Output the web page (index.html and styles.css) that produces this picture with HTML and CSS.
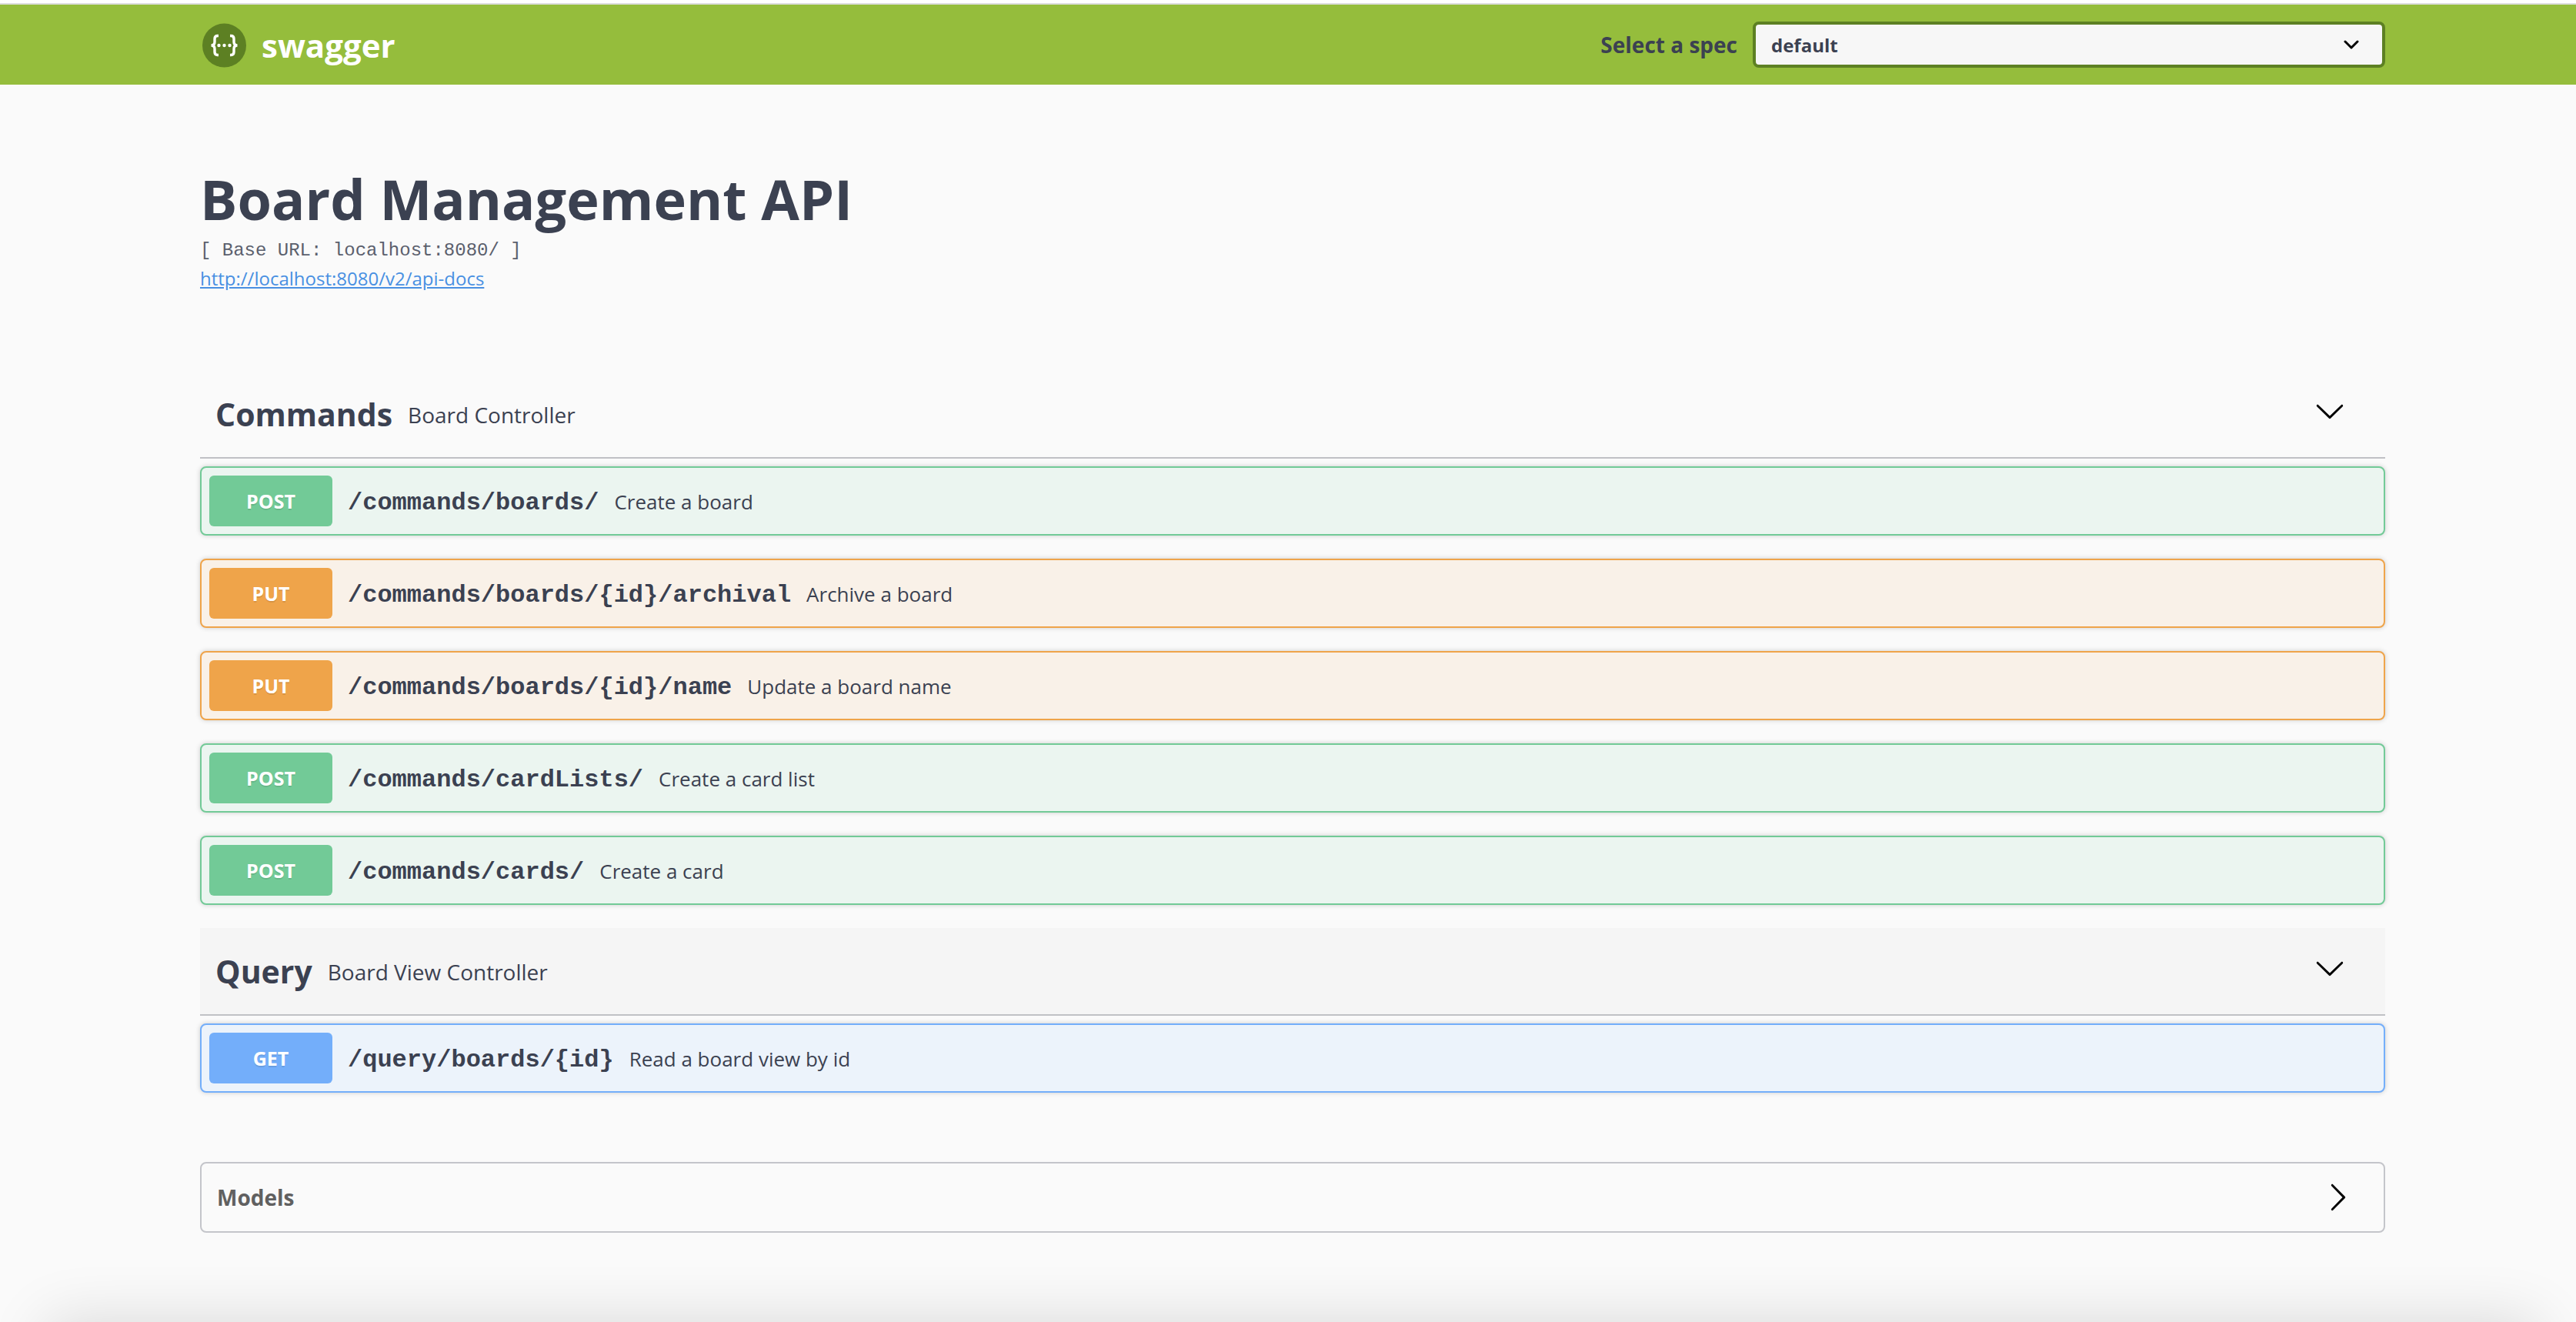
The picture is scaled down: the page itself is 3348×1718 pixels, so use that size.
FILE: index.html
```html
<!DOCTYPE html>
<html lang="en">
<head>
<meta charset="utf-8">
<title>Swagger UI</title>
<link rel="stylesheet" href="styles.css">
</head>
<body>
<svg class="sprite" aria-hidden="true">
  <symbol id="arrow-down" viewBox="0 0 20 20"><path d="M17.418 6.109c.272-.268.709-.268.979 0s.271.701 0 .969l-7.908 7.83c-.27.268-.707.268-.979 0l-7.908-7.83c-.27-.268-.27-.701 0-.969.271-.268.709-.268.979 0L10 13.25l7.418-7.141z"/></symbol>
  <symbol id="arrow-right" viewBox="0 0 20 20"><path d="M13.25 10L6.109 2.58c-.268-.27-.268-.707 0-.979.268-.27.701-.27.969 0l7.83 7.908c.268.271.268.709 0 .979l-7.83 7.908c-.271.271-.701.27-.969 0-.268-.269-.268-.707 0-.979L13.25 10z"/></symbol>
</svg>

<header class="topbar">
  <div class="wrapper topbar-row">
    <a class="brand" href="#">
      <svg class="brand-mark" viewBox="0 0 58 58" aria-hidden="true">
        <circle cx="29.500" cy="29" r="28.500" fill="#5d8023"/>
        <g fill="none" stroke="#fff" stroke-width="3.400">
          <path d="M22 16.500h-1.200q-3.800 0-3.800 4v4q0 4.500-4.500 4.500q4.500 0 4.500 4.500v4q0 4 3.800 4h1.200"/>
          <path d="M37 16.500h1.200q3.800 0 3.800 4v4q0 4.500 4.500 4.500q-4.500 0-4.500 4.500v4q0 4-3.800 4h-1.200"/>
        </g>
        <g fill="#fff"><circle cx="22.500" cy="29" r="2.200"/><circle cx="29.500" cy="29" r="2.200"/><circle cx="36.500" cy="29" r="2.200"/></g>
      </svg>
      <span>swagger</span>
    </a>
    <div class="spec">
      <label for="spec">Select a spec</label>
      <div class="spec-box">
        <select id="spec"><option>default</option></select>
        <svg class="spec-arrow" viewBox="0 0 20 12" aria-hidden="true"><path d="M2 2l8 8 8-8" fill="none" stroke="#000" stroke-width="3" stroke-linecap="round" stroke-linejoin="round"/></svg>
      </div>
    </div>
  </div>
</header>

<main class="wrapper">
  <section class="info">
    <h1>Board Management API</h1>
    <p class="base-url">[ Base URL: localhost:8080/ ]</p>
    <p class="docs"><a href="http://localhost:8080/v2/api-docs">http://localhost:8080/v2/api-docs</a></p>
  </section>

  <section class="tag">
    <button class="tag-head"><span class="tag-name">Commands</span><span class="tag-text">Board Controller</span><svg class="arrow"><use href="#arrow-down"/></svg></button>
    <div class="ops">
      <button class="op post"><span class="method">POST</span><span class="path">/commands/boards/</span><span class="summary">Create a board</span></button>
      <button class="op put"><span class="method">PUT</span><span class="path">/commands/boards/{id}/archival</span><span class="summary">Archive a board</span></button>
      <button class="op put"><span class="method">PUT</span><span class="path">/commands/boards/{id}/name</span><span class="summary">Update a board name</span></button>
      <button class="op post"><span class="method">POST</span><span class="path">/commands/cardLists/</span><span class="summary">Create a card list</span></button>
      <button class="op post"><span class="method">POST</span><span class="path">/commands/cards/</span><span class="summary">Create a card</span></button>
    </div>
  </section>

  <section class="tag">
    <button class="tag-head active"><span class="tag-name">Query</span><span class="tag-text">Board View Controller</span><svg class="arrow"><use href="#arrow-down"/></svg></button>
    <div class="ops">
      <button class="op get"><span class="method">GET</span><span class="path">/query/boards/{id}</span><span class="summary">Read a board view by id</span></button>
    </div>
  </section>

  <button class="models"><span>Models</span><svg class="arrow"><use href="#arrow-right"/></svg></button>
</main>
<div class="bottom-shade"></div>
</body>
</html>
```
FILE: styles.css
```css
* { box-sizing: border-box; }

html { background: #fafafa; }

body {
  margin: 0;
  border-top: 4px solid #fff;
  color: #3b4151;
  font-family: "Open Sans", sans-serif;
}

h1, p { margin: 0; }
button, select { font: inherit; color: inherit; }
button { cursor: pointer; }
.sprite { display: none; }

.wrapper {
  max-width: 2920px;
  margin: 0 auto;
  padding: 0 34px 0 46px;
}

.topbar {
  border-top: 2px solid #dedede;
  padding: 22px 0;
  background: #95bd3c;
}

.topbar-row {
  display: flex;
  align-items: center;
  justify-content: space-between;
}

.brand {
  display: flex;
  align-items: center;
  gap: 20px;
  padding: 2px 0 0 2px;
  color: #fff;
  font-size: 42px;
  font-weight: 700;
  line-height: 58px;
  text-decoration: none;
}
.brand-mark { width: 58px; height: 58px; }

.spec {
  display: flex;
  align-items: center;
  gap: 20px;
  font-weight: 700;
}
.spec label { font-size: 28px; }
.spec-box { display: grid; width: 822px; align-items: center; }
.spec-box > * { grid-area: 1 / 1; }
.spec select {
  appearance: none;
  height: 60px;
  padding: 0 20px;
  border: 4px solid #5d8023;
  border-radius: 8px;
  background: #f7f7f7;
  font-size: 24px;
  font-weight: 700;
}
.spec-arrow {
  width: 20px;
  height: 12px;
  margin-right: 34px;
  justify-self: end;
  pointer-events: none;
}

.info { padding: 98px 0 102px; }
h1 { font-size: 72px; line-height: 100px; }
.base-url {
  padding-top: 2px;
  font-family: "Liberation Mono", monospace;
  font-size: 24px;
  line-height: 32px;
  color: #5b606d;
}
.docs { padding-top: 2px; font-size: 24px; line-height: 36px; }
.docs a { color: #4990e2; }

.tag-head {
  display: flex;
  align-items: center;
  width: 100%;
  height: 114px;
  padding: 0 52px 0 20px;
  border: 0;
  border-bottom: 2px solid #c0c1c5;
  background: none;
  text-align: left;
}
.tag-head.active { background: #f5f5f5; }
.tag-name { font-size: 41px; font-weight: 700; }
.tag-text { padding: 2px 0 0 20px; font-size: 28px; }
.arrow { width: 40px; height: 40px; margin-left: auto; }
.tag-head .arrow { margin-bottom: 8px; }

.ops {
  display: flex;
  flex-direction: column;
  gap: 30px;
  padding: 10px 0 30px;
}
.op {
  display: flex;
  align-items: center;
  height: 90px;
  padding: 10px;
  border: 2px solid;
  border-radius: 8px;
  box-shadow: 0 0 6px rgba(0, 0, 0, .19);
  text-align: left;
}
.method {
  width: 160px;
  border-radius: 6px;
  color: #fff;
  font-size: 25px;
  font-weight: 700;
  line-height: 66px;
  text-align: center;
  text-shadow: 0 2px 0 rgba(0, 0, 0, .1);
}
.path {
  padding: 4px 20px 0;
  font-family: "Liberation Mono", monospace;
  font-size: 32px;
  font-weight: 700;
}
.summary { padding-top: 2px; font-size: 26px; }

.post { border-color: #72ca97; background: #ebf5f0; }
.post .method { background: #72ca97; }
.put { border-color: #efa44a; background: #f9f1e8; }
.put .method { background: #efa44a; }
.get { border-color: #73aefa; background: #ecf3fb; }
.get .method { background: #73aefa; }
.op .path, .op .summary { color: #3b4151; }

.models {
  display: flex;
  align-items: center;
  width: 100%;
  height: 92px;
  margin: 60px 0 100px;
  padding: 0 40px 0 20px;
  border: 2px solid #c4c5ca;
  border-radius: 8px;
  background: none;
  color: #606060;
  font-size: 28px;
  font-weight: 700;
}

.bottom-shade {
  position: fixed;
  bottom: -200px;
  left: 62px;
  right: 50px;
  height: 200px;
  box-shadow: 0 0 80px rgba(0, 0, 0, .14);
  pointer-events: none;
}
```
